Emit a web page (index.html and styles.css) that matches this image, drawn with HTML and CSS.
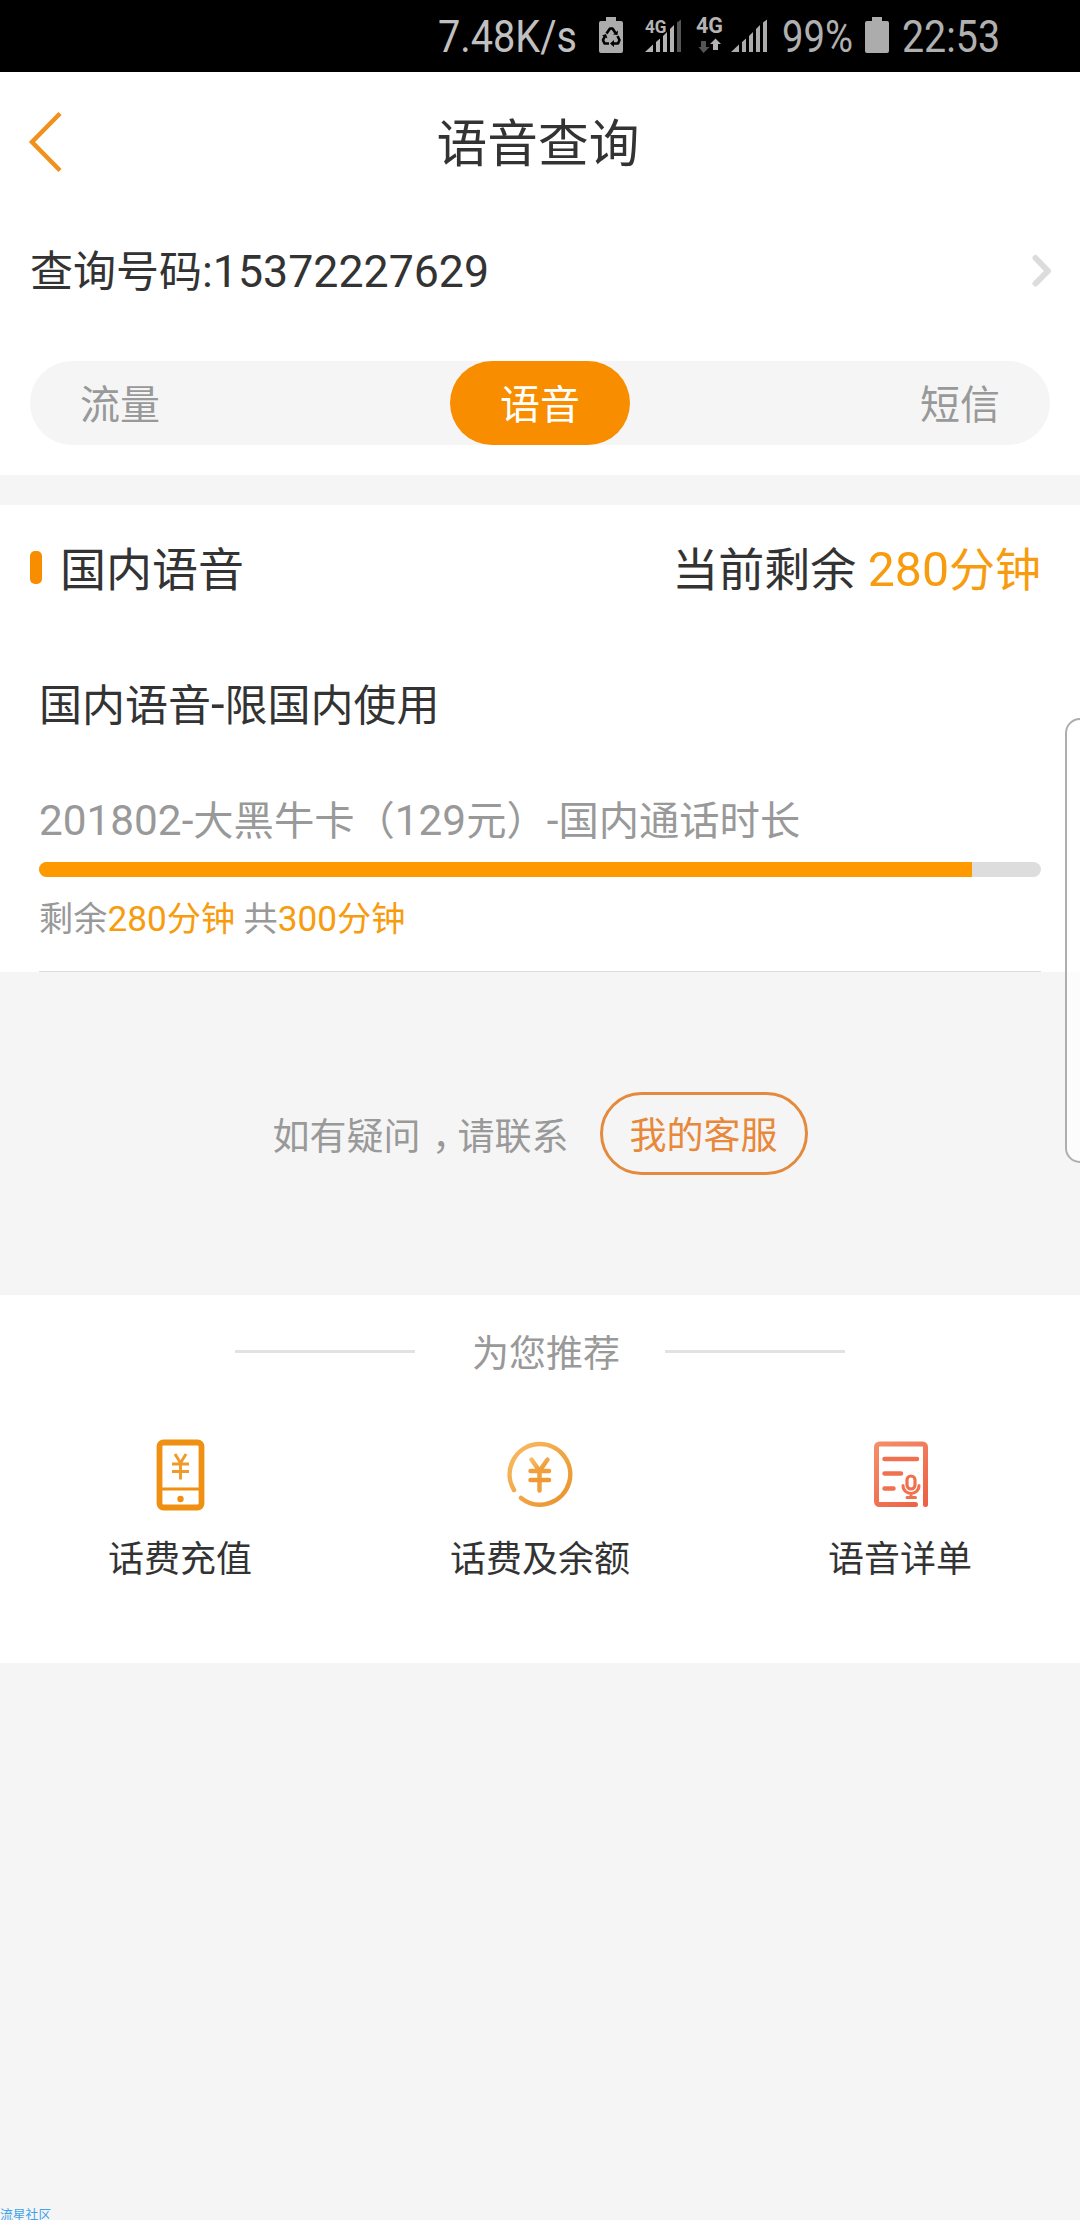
FILE: index.html
```html
<!DOCTYPE html>
<html lang="zh-CN">
<head>
<meta charset="utf-8">
<title>语音查询</title>
<link rel="stylesheet" href="styles.css">
</head>
<body>
<div class="screen">
  <div class="status">
    <svg class="speed" width="142" height="72" viewBox="0 0 142 72"><text x="0" y="52" textLength="139" lengthAdjust="spacingAndGlyphs">7.48K/s</text></svg>
    <svg class="saver" width="24" height="72" viewBox="0 0 24 72">
      <path d="M7 17h10v4h5a2 2 0 0 1 2 2v28a2 2 0 0 1-2 2H2a2 2 0 0 1-2-2V23a2 2 0 0 1 2-2h5z" fill="#acacac"/>
      <g fill="none" stroke="#000" stroke-width="2.6" stroke-linejoin="round">
        <path d="M7.5 33.5 11 28.500h2.500l3 4.500"/><path d="M18.500 36l2 4-1.500 3.500h-5"/><path d="M10 43.500H5.500L4 40l2-4"/>
      </g>
      <path d="M14 34.500l4.500.5.500-4.500zM15 40v7l-4-3.500zM3 35.500l4-1.500 1.500 4.500z" fill="#000"/>
    </svg>
    <svg class="sim1" width="37" height="72" viewBox="0 0 37 72">
      <text class="net" x="0" y="32.500" textLength="21.500" lengthAdjust="spacingAndGlyphs">4G</text>
      <path d="M0 52l8-7.500V52zM11 52V42l4-3.500V52zM18 52V36l4-4v20zM25 52V29l4-4v27z" fill="#b4b4b4"/>
      <path d="M32 52V22.500l4-3V52z" fill="#555"/>
    </svg>
    <svg class="data" width="28" height="72" viewBox="0 0 28 72">
      <text class="net" x="0" y="32.500" textLength="27" lengthAdjust="spacingAndGlyphs">4G</text>
      <path d="M5 41h5v6h3.500L7.500 53l-5-6H5z" fill="#555"/>
      <path d="M17 50v-6h-3l5.500-5.500 5.500 5.500h-3v6z" fill="#b4b4b4"/>
    </svg>
    <svg class="sim2" width="37" height="72" viewBox="0 0 37 72">
      <path d="M0 52l8-7.500V52zM11 52V42l4-3.500V52zM18 52V36l4-4v20zM25 52V29l4-4v27zM32 52V22.500l4-3V52z" fill="#acacac"/>
    </svg>
    <svg class="percent" width="72" height="72" viewBox="0 0 72 72"><text x="0" y="52" textLength="71" lengthAdjust="spacingAndGlyphs">99%</text></svg>
    <svg class="battery" width="24" height="72" viewBox="0 0 24 72"><path d="M7 17h10v4h5a2 2 0 0 1 2 2v28a2 2 0 0 1-2 2H2a2 2 0 0 1-2-2V23a2 2 0 0 1 2-2h5z" fill="#acacac"/></svg>
    <svg class="clock" width="100" height="72" viewBox="0 0 100 72"><text x="0" y="52" textLength="98" lengthAdjust="spacingAndGlyphs">22:53</text></svg>
  </div>

  <header class="header">
    <svg class="back" width="34" height="60" viewBox="0 0 34 60"><path d="M31 1.500 3 30 31 58.500" fill="none" stroke="#f0911c" stroke-width="4.500"/></svg>
    <h1 class="title">语音查询</h1>
  </header>

  <div class="number">
    <span>查询号码<span class="digits">:15372227629</span></span>
    <svg class="chevron" width="20" height="34" viewBox="0 0 20 34"><path d="M4.500 4 17 17 4.500 29.500" fill="none" stroke="#dcdcdc" stroke-width="6" stroke-linecap="round" stroke-linejoin="round"/></svg>
  </div>

  <nav class="tabs">
    <span class="tab">流量</span>
    <span class="tab active">语音</span>
    <span class="tab">短信</span>
  </nav>

  <section class="usage">
    <div class="summary">
      <i class="mark"></i>
      <span class="kind">国内语音</span>
      <span>当前剩余 <b class="accent"><span class="digits">280</span>分钟</b></span>
    </div>
    <div class="plan">
      <div class="scope">国内语音<span class="digits">-</span>限国内使用</div>
      <div class="name"><span class="digits">201802-</span>大黑牛卡（<span class="digits">129</span>元）<span class="digits">-</span>国内通话时长</div>
      <div class="meter"><div class="fill" style="width:93.100%"></div></div>
      <div class="detail">剩余<b class="accent"><span class="digits">280</span>分钟</b> 共<b class="accent"><span class="digits">300</span>分钟</b></div>
    </div>
  </section>

  <div class="contact">
    <span>如有疑问<span class="comma">，</span>请联系</span>
    <a class="service">我的客服</a>
  </div>

  <section class="recommend">
    <div class="heading">为您推荐</div>
    <div class="links">
      <div class="link">
        <svg width="72" height="84" viewBox="0 0 72 84">
          <rect x="15.500" y="9.500" width="42" height="65" rx="4" fill="none" stroke="#f09012" stroke-width="5.800"/>
          <path d="M16 56h41" stroke="#f09012" stroke-width="2.800"/>
          <circle cx="36.500" cy="66" r="3.200" fill="#f09012"/>
          <path d="M31 21l5.500 9 5.500-9M36.500 29.500v17M28 31h17M28 38.500h17" fill="none" stroke="#f09a2a" stroke-width="2.900"/>
        </svg>
        <span>话费充值</span>
      </div>
      <div class="link">
        <svg width="72" height="84" viewBox="1.500 0.500 72 84">
          <defs><linearGradient id="coin" x1="0" y1="0" x2="1" y2="1"><stop offset="0" stop-color="#fabb62"/><stop offset="1" stop-color="#e8922b"/></linearGradient></defs>
          <g fill="none" stroke="url(#coin)" stroke-linecap="round">
            <path d="M11.500 57.500A30.300 30.300 0 1 1 18.500 65.500" stroke-width="4.500"/>
            <path d="M29 27l8 11.500L45 27" stroke-width="4.500"/>
            <path d="M37 38v20" stroke-width="4.500" stroke="#efa03c"/>
            <path d="M28 38.500h18.500" stroke-width="4.500" stroke="#efa03c"/><path d="M28 47.500h18.500" stroke-width="4.500" stroke="#ed9a34"/>
          </g>
        </svg>
        <span>话费及余额</span>
      </div>
      <div class="link">
        <svg width="72" height="84" viewBox="0 0 72 84">
          <defs><linearGradient id="sheet" gradientUnits="userSpaceOnUse" x1="10" y1="8" x2="62" y2="74"><stop offset="0" stop-color="#f5906c"/><stop offset="1" stop-color="#ec5f42"/></linearGradient></defs>
          <g fill="none" stroke="#f0714f" stroke-linecap="round">
            <path d="M51.500 71.500H15.500a3 3 0 0 1-3-3V14a3 3 0 0 1 3-3h43a3 3 0 0 1 3 3V71.500" stroke="url(#sheet)" stroke-width="5"/>
            <path d="M20.500 26H53M20.500 40.500H37M20.500 55.500h9" stroke-width="4.500"/>
            <rect x="43" y="43" width="8" height="13" rx="4" stroke-width="3.200"/>
            <path d="M39 52.500c0 10.500 16 10.500 16 0M47 61v3M43 64.500h8.500" stroke-width="3"/>
          </g>
        </svg>
        <span>语音详单</span>
      </div>
    </div>
  </section>

  <div class="edge-panel"></div>
  <div class="watermark">流星社区</div>
</div>
</body>
</html>
```
FILE: styles.css
```css
* { box-sizing: border-box; }
body { margin: 0; font-family: Roboto, "Noto Sans CJK SC", sans-serif; color: #333; background: #f5f5f5; }
svg { display: block; flex: none; overflow: visible; }
b { font-weight: normal; }

.screen { position: relative; width: 1080px; height: 2220px; overflow: hidden; background: #f5f5f5; white-space: nowrap; }

.status { display: flex; height: 72px; padding-left: 438px; background: #000; }
.status text { font-size: 45px; fill: #b0b0b0; }
.status .speed text { fill: #c0c0c0; }
.status .sim1 .net { font-size: 18px; font-weight: 700; fill: #b4b4b4; }
.status .data .net { font-size: 22px; font-weight: 700; fill: #b4b4b4; }
.saver { margin-left: 19px; }
.sim1 { margin-left: 22px; }
.data { margin-left: 14px; }
.sim2 { margin-left: 7px; }
.percent { margin-left: 14px; }
.battery { margin-left: 11px; }
.clock { margin-left: 13px; }

.header { display: grid; grid-template-columns: 34px 1fr 34px; align-items: center; height: 145px; padding: 0 33px 0 29px; background: #fff; }
.back { margin-bottom: 6px; }
.title { margin: 0; font-size: 50.700px; font-weight: normal; line-height: 60px; text-align: center; }

.number { display: flex; align-items: center; justify-content: space-between; height: 112px; padding: 0 29px 0 30px; background: #fff; font-size: 43px; line-height: 60px; }
.number > span { margin-bottom: 2px; }
.number .digits { font-size: 44.700px; }
.chevron { margin-bottom: 5px; }

.tabs { display: flex; justify-content: space-between; height: 176px; padding: 32px 30px 0; border-bottom: 30px solid #f5f5f5; background: linear-gradient(#f5f5f5, #f5f5f5) 72px 32px / 936px 84px no-repeat #fff; }
.tab { width: 180px; height: 84px; padding: 3px 50px 0; border-radius: 42px; background: #f5f5f5; color: #999; font-size: 40px; line-height: 84px; }
.tab.active { background: #f98d00; color: #fff; }

.usage { height: 467px; padding-top: 32px; background: #fff; }
.summary { display: flex; align-items: center; height: 68px; padding: 0 39px 0 30px; font-size: 46px; line-height: 60px; }
.summary > span { margin-bottom: 3px; }
.summary .digits { font-size: 48.200px; }
.mark { width: 12px; height: 33px; margin-bottom: 7px; border-radius: 5px; background: #f98d00; }
.kind { flex: 1; margin-left: 18px; }
.accent { color: #f89c0f; }
.plan { height: 367px; margin: 0 39px; border-bottom: 1px solid #ddd; }
.scope { height: 132px; padding-top: 68px; font-size: 43px; line-height: 64px; }
.scope .digits { font-size: 49px; }
.name { height: 64px; margin-top: 52px; color: #999; font-size: 40.300px; line-height: 64px; }
.name .digits { font-size: 42.300px; }
.meter { height: 15px; margin-top: 9px; border-radius: 8px; background: #ddd; overflow: hidden; }
.fill { height: 100%; background: #f90; }
.detail { margin-top: 16px; color: #999; font-size: 34.200px; line-height: 52px; }
.detail .digits { font-size: 35.200px; }

.contact { display: flex; justify-content: center; align-items: center; height: 323px; gap: 31px; color: #999; font-size: 37px; }
.comma { padding: 0 7px 0 11.500px; font-feature-settings: "halt"; }
.service { width: 208px; height: 83px; padding-top: 2px; border: 3px solid #e38a3c; border-radius: 42px; color: #e8883a; line-height: 80px; text-align: center; }

.recommend { height: 368px; padding-top: 29px; background: #fff; }
.heading { display: flex; align-items: center; justify-content: center; width: 610px; height: 54px; margin: 0 auto; color: #999; font-size: 37px; }
.heading::before, .heading::after { content: ""; width: 180px; height: 3px; background: #e2e2e2; }
.heading::before { margin-right: 57px; }
.heading::after { margin-left: 45px; }
.links { display: grid; grid-template-columns: repeat(3, 360px); margin-top: 55px; }
.link { display: flex; flex-direction: column; align-items: center; gap: 15px; font-size: 36px; line-height: 56px; }

.edge-panel { position: absolute; left: 1065px; top: 718px; width: 30px; height: 445px; border: 2px solid #aeaeae; border-radius: 18px; background: rgba(255, 255, 255, .7); }
.watermark { position: absolute; left: 0; bottom: 0; color: #3fa3ec; font-size: 12.800px; line-height: 10px; }
```
